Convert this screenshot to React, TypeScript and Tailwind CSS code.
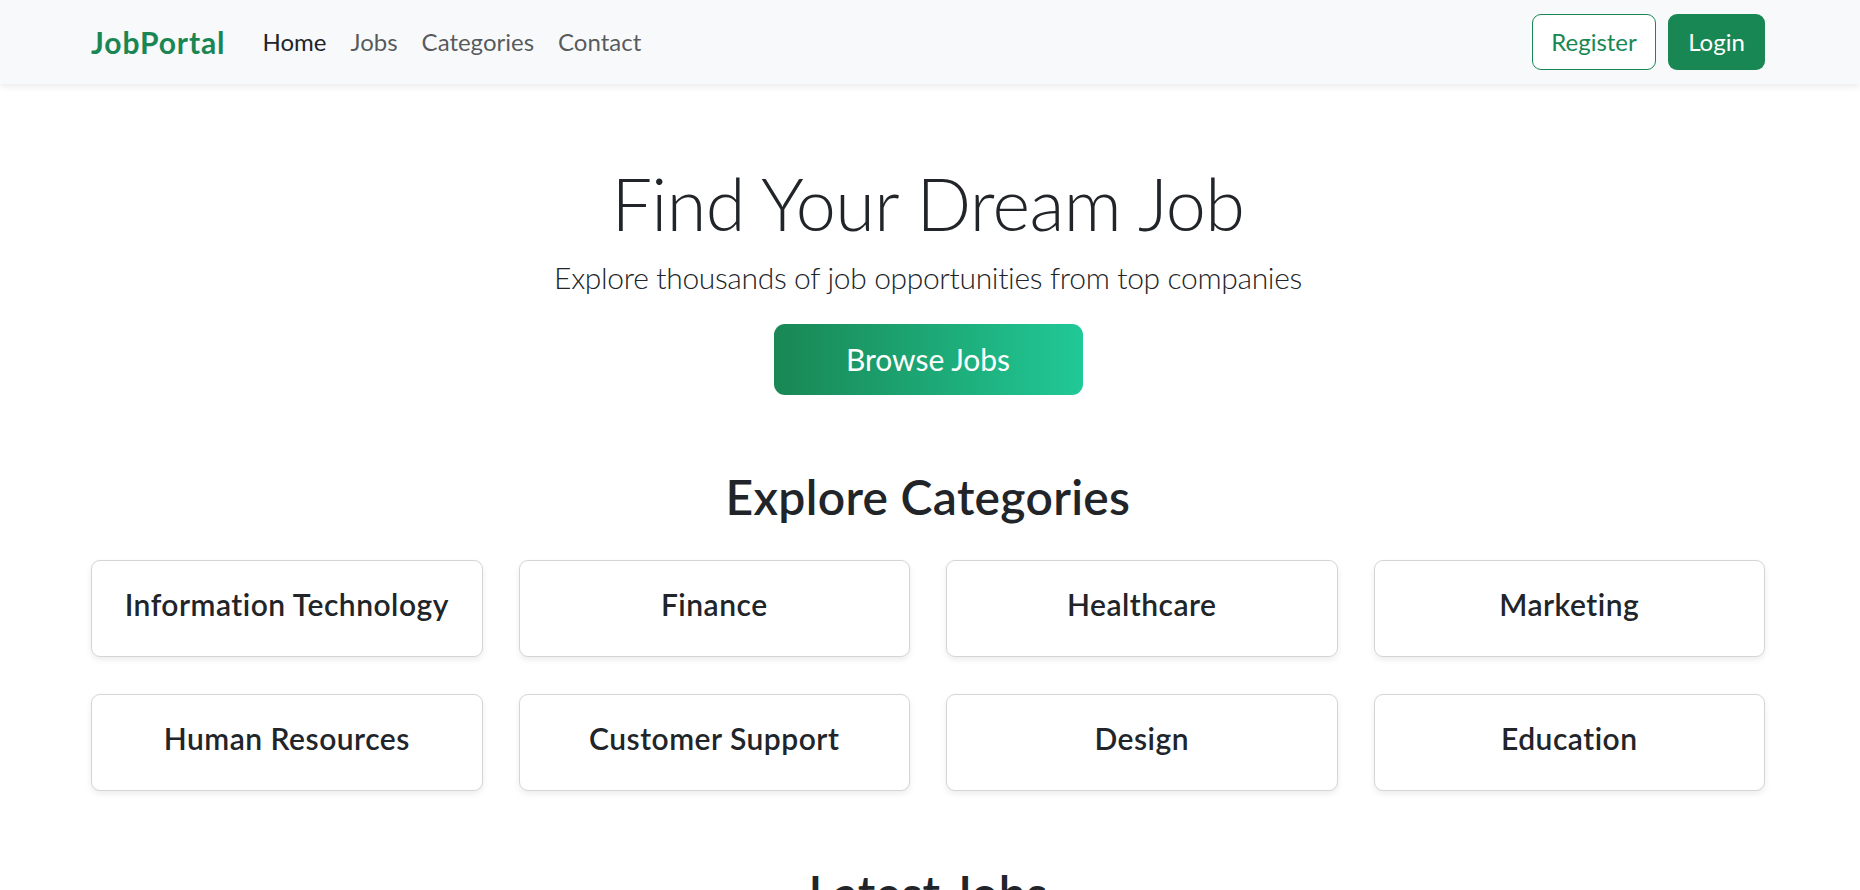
const categories = [
  'Information Technology',
  'Finance',
  'Healthcare',
  'Marketing',
  'Human Resources',
  'Customer Support',
  'Design',
  'Education',
]

function Navbar() {
  return (
    <nav className="h-[84px] bg-[#f8f9fa] shadow-[0_3px_6px_rgba(0,0,0,0.075)] relative z-10">
      <div className="ml-[91px] w-[1674px] h-full flex items-center">
        <a className="text-[30px] leading-[1.2] font-bold tracking-[0.9px] text-[#198754] mr-[25px]">JobPortal</a>
        <ul className="flex items-center text-[24px] leading-[1.2]">
          <li className="px-[12px] text-[#212529]">Home</li>
          <li className="px-[12px] text-[#212529]/75">Jobs</li>
          <li className="px-[12px] text-[#212529]/75">Categories</li>
          <li className="px-[12px] text-[#212529]/75">Contact</li>
        </ul>
        <div className="ml-auto flex items-center gap-[12px]">
          <button className="h-[56px] w-[124px] rounded-[9px] border border-[#198754] text-[#198754] text-[24px] bg-white">
            Register
          </button>
          <button className="h-[56px] w-[97px] rounded-[9px] bg-[#198754] text-white text-[24px]">
            Login
          </button>
        </div>
      </div>
    </nav>
  )
}

function Hero() {
  return (
    <section className="ml-[91px] w-[1674px] pt-[76px] text-center flex flex-col items-center">
      <h1 className="text-[72px] leading-[1.2] font-light tracking-[-0.6px] text-[#212529]">Find Your Dream Job</h1>
      <p className="mt-[9px] text-[30px] leading-[1.5] font-light tracking-[-0.34px] text-[#212529]">
        Explore thousands of job opportunities from top companies
      </p>
      <button className="mt-[24px] h-[71px] w-[309px] rounded-[11px] bg-gradient-to-r from-[#198754] to-[#20c997] text-white text-[30px]">
        Browse Jobs
      </button>
    </section>
  )
}

function Categories() {
  return (
    <section className="ml-[91px] w-[1674px]">
      <h2 className="mt-[73px] text-center text-[48px] leading-[1.2] font-semibold tracking-[0.3px] text-[#212529]">
        Explore Categories
      </h2>
      <div className="mt-[34px] grid grid-cols-4 gap-x-[36px] gap-y-[37px]">
        {categories.map(name => (
          <div
            key={name}
            className="h-[97px] pt-[25px] rounded-[9px] border border-[#d5d5d5] bg-white shadow-[0_3px_6px_rgba(0,0,0,0.075)] text-center"
          >
            <h5 className="text-[30px] leading-[1.2] font-semibold tracking-[0.5px] text-[#212529]">{name}</h5>
          </div>
        ))}
      </div>
      <h2 className="mt-[73px] text-center text-[48px] leading-[1.2] font-semibold tracking-[0.3px] text-[#212529]">
        Latest Jobs
      </h2>
    </section>
  )
}

export default function App() {
  return (
    <div className="min-h-screen bg-white font-['Lato','Liberation_Sans',sans-serif]">
      <Navbar />
      <Hero />
      <Categories />
      <div className="h-[200px]" />
    </div>
  )
}
